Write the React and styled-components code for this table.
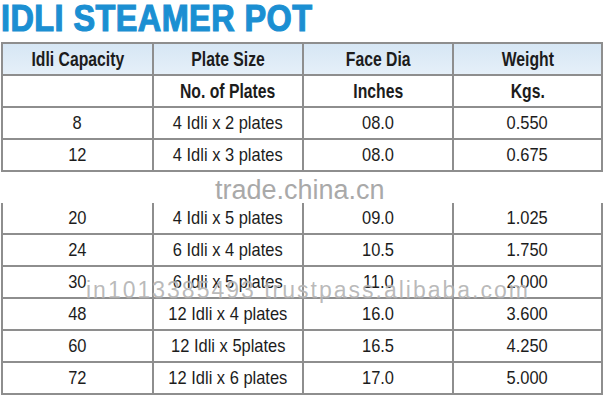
import React from "react";
import styled, { createGlobalStyle } from "styled-components";

const rows = [
  ["8", "4 Idli x 2 plates", "08.0", "0.550"],
  ["12", "4 Idli x 3 plates", "08.0", "0.675"],
  null,
  ["20", "4 Idli x 5 plates", "09.0", "1.025"],
  ["24", "6 Idli x 4 plates", "10.5", "1.750"],
  ["30", "6 Idli x 5 plates", "11.0", "2.000"],
  ["48", "12 Idli x 4 plates", "16.0", "3.600"],
  ["60", "12 Idli x 5plates", "16.5", "4.250"],
  ["72", "12 Idli x 6 plates", "17.0", "5.000"],
];

const App = () => {
  return (
    <Page>
      <GlobalStyle />
      <Title>
        <TitleText>IDLI STEAMER POT</TitleText>
      </Title>
      <SpecTable>
        <colgroup>
          <col style={{ width: 151 }} />
          <col style={{ width: 150 }} />
          <col style={{ width: 150 }} />
          <col style={{ width: 149 }} />
        </colgroup>
        <thead>
          <HeadRow $tint>
            <HeadCell><Squeeze $head>Idli Capacity</Squeeze></HeadCell>
            <HeadCell><Squeeze $head>Plate Size</Squeeze></HeadCell>
            <HeadCell><Squeeze $head>Face Dia</Squeeze></HeadCell>
            <HeadCell><Squeeze $head>Weight</Squeeze></HeadCell>
          </HeadRow>
          <HeadRow>
            <HeadCell />
            <HeadCell><Squeeze $head>No. of Plates</Squeeze></HeadCell>
            <HeadCell><Squeeze $head>Inches</Squeeze></HeadCell>
            <HeadCell><Squeeze $head>Kgs.</Squeeze></HeadCell>
          </HeadRow>
        </thead>
        <tbody>
          {rows.map((row, i) =>
            row ? (
              <tr key={i}>
                {row.map((v, j) => (
                  <Cell key={j}><Squeeze>{v}</Squeeze></Cell>
                ))}
              </tr>
            ) : (
              <tr key={i}>
                <BlankCell />
                <BlankCell />
                <BlankCell />
                <BlankCell />
              </tr>
            )
          )}
        </tbody>
      </SpecTable>
      {/* watermarks lying over the table */}
      <MarkTrade>trade.china.cn</MarkTrade>
      <MarkTrust>in1013385493 trustpass.alibaba.com</MarkTrust>
    </Page>
  );
};

const GlobalStyle = createGlobalStyle`
  body {
    margin: 0;
    background: #ffffff;
    font-family: "Liberation Sans", Arial, sans-serif;
  }
`;

const Page = styled.div`
  position: relative;
  width: 607px;
  height: 401px;
  overflow: hidden;
  background: #fff;
  padding-left: 1px;
  box-sizing: border-box;
`;

const Title = styled.h1`
  margin: 0 0 5px 0;
  line-height: 37px;
  font-size: 36px;
  font-weight: 700;
  color: #1b8fd2;
  white-space: nowrap;
`;

const TitleText = styled.span`
  display: inline-block;
  transform: scaleX(0.9);
  transform-origin: left center;
  -webkit-text-stroke: 1.2px #1b8fd2;
  letter-spacing: 0.5px;
`;

const SpecTable = styled.table`
  border-collapse: collapse;
  table-layout: fixed;
  width: 600px;
  color: #1c1c1c;
`;

const HeadRow = styled.tr`
  background: ${(p) =>
    p.$tint ? "linear-gradient(#d6e6f4, #e6f0f9)" : "#ffffff"};
`;

const HeadCell = styled.td`
  height: 30px;
  padding: 0;
  border: 2px solid #8e8e8e;
  text-align: center;
  vertical-align: middle;
`;

const Cell = styled.td`
  height: 30px;
  padding: 0;
  border: 2px solid #8e8e8e;
  text-align: center;
  vertical-align: middle;
`;

const BlankCell = styled.td`
  height: 31px;
  padding: 0;
  border-top: 2px solid #8e8e8e;
  border-left: 2px hidden;
  border-right: 2px hidden;
  border-bottom: 2px hidden;
`;

const Squeeze = styled.span`
  display: inline-block;
  white-space: nowrap;
  font-size: ${(p) => (p.$head ? "21px" : "18.5px")};
  font-weight: ${(p) => (p.$head ? 700 : 400)};
  transform: scaleX(${(p) => (p.$head ? 0.75 : 0.89)});
  transform-origin: center;
  line-height: 1;
`;

const MarkTrade = styled.div`
  position: absolute;
  left: 215px;
  top: 174px;
  font-size: 27px;
  line-height: 32px;
  color: #a9a9a9;
  white-space: nowrap;
`;

const MarkTrust = styled.div`
  position: absolute;
  left: 86px;
  top: 278px;
  font-size: 23px;
  line-height: 24px;
  letter-spacing: 2px;
  color: rgba(140, 140, 140, 0.6);
  text-shadow: 0 0 1px rgba(255, 255, 255, 0.8);
  white-space: nowrap;
`;

export default App;
